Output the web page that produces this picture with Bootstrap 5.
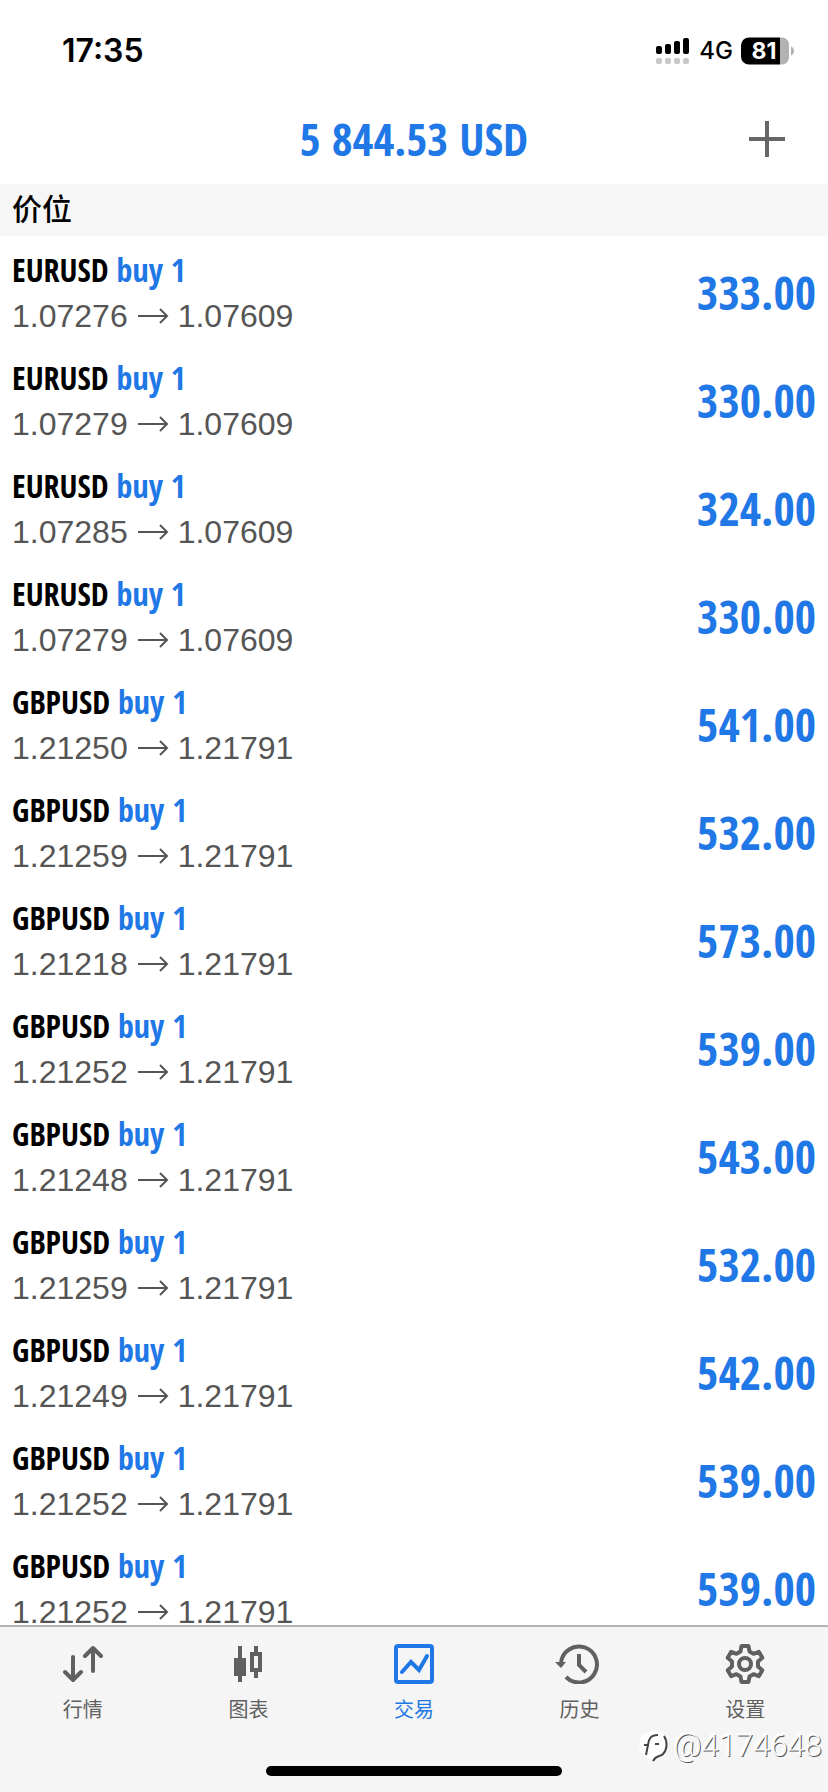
<!DOCTYPE html>
<html lang="zh-CN">
<head>
<meta charset="utf-8">
<meta name="viewport" content="width=device-width, initial-scale=1">
<title>交易</title>
<link href="https://cdn.jsdelivr.net/npm/bootstrap@5.3.0/dist/css/bootstrap.min.css" rel="stylesheet">
<style>
  :root { --accent: #1f78e6; --ink: #606060; }
  body { font-family: "Liberation Sans", "Noto Sans CJK SC", sans-serif; background: #fff; color: #000; }
  .narrow { font-family: "Open Sans Condensed", "Roboto Condensed", sans-serif; font-weight: 600; }
  .accent { color: var(--accent); }
  .status-bar { height: 96px; padding: 6px 33px 0 62px; font-family: Inter, sans-serif; }
  .clock { font-size: 32px; font-weight: 600; }
  .network { font-size: 24px; font-weight: 500; }
  .title-bar { height: 88px; padding: 0 41px 2px; }
  .title-spacer { width: 40px; }
  .balance { font-size: 45px; line-height: 48px; }
  .section-head { height: 52px; padding: 0 12px; background: #f6f6f6; font-size: 30px; font-weight: 500; line-height: 52px; }
  .position { height: 108px; padding: 4px 12px 0; }
  .symbol { font-size: 32px; line-height: 48px; }
  .rates { font-size: 32px; line-height: 36px; padding: 4px 0; color: #555; }
  .profit { font-size: 46px; line-height: 52px; }
  .tab-bar { background: #f5f5f5; border-top: 2px solid #b4b4b4; }
  .tab-link { color: var(--ink); font-size: 20px; line-height: 28px; padding-top: 17px; gap: 12px; }
  .tab-link.active { color: var(--accent); }
  .home-area { height: 68px; padding-bottom: 16px; }
  .home-pill { width: 296px; height: 10px; border-radius: 5px; background: #000; }
  .user-mark { right: 6px; bottom: 26px; font: 300 31px/40px Roboto, sans-serif; color: #fafafa; text-shadow: 1px 1px 0 #555, -1px -1px 0 #fff; }
</style>
</head>
<body>
<div class="d-flex flex-column vh-100 overflow-hidden position-relative">
  <div class="status-bar d-flex align-items-center justify-content-between flex-shrink-0">
    <span class="clock">17:35</span>
    <div class="d-flex align-items-center">
      <svg class="me-2" width="36" height="30" viewBox="0 0 36 30" aria-hidden="true">
        <g fill="#000"><rect x="1" y="10" width="6" height="8" rx="2"/><rect x="10" y="8" width="6" height="10" rx="2"/><rect x="19" y="5" width="6" height="13" rx="2"/><rect x="28" y="2" width="6" height="16" rx="2"/></g>
        <g fill="#c8c8c8"><rect x="1" y="22" width="6" height="6" rx="2"/><rect x="10" y="22" width="6" height="6" rx="2"/><rect x="19" y="22" width="6" height="6" rx="2"/><rect x="28" y="22" width="6" height="6" rx="2"/></g>
      </svg>
      <span class="network me-2">4G</span>
      <svg width="54" height="28" viewBox="0 0 54 28" role="img" aria-label="81%">
        <path fill="#b2b2b2" d="M39 0.500h2a7 7 0 0 1 7 7v13a7 7 0 0 1-7 7h-2zM50 9.500c4 1.500 4 7.500 0 9z"/>
        <path fill="#000" d="M8 .5h31v27H8a8 8 0 0 1-8-8v-11a8 8 0 0 1 8-8z"/>
        <text x="23" y="22" text-anchor="middle" font-size="23" font-weight="700" fill="#fff">81</text>
      </svg>
    </div>
  </div>

  <header class="title-bar d-flex align-items-center justify-content-between flex-shrink-0">
    <span class="title-spacer"></span>
    <h1 class="balance narrow accent m-0">5 844.53 USD</h1>
    <button type="button" class="btn p-0 border-0 d-flex" aria-label="添加">
      <svg width="40" height="40" viewBox="0 0 40 40" fill="none" stroke="#666" stroke-width="4"><path d="M20 2v36M2 20h36"/></svg>
    </button>
  </header>

  <h2 class="section-head m-0 flex-shrink-0">价位</h2>

  <main class="flex-grow-1 overflow-hidden">
    <ul class="list-unstyled m-0" id="positions"></ul>
  </main>

  <div class="tab-bar flex-shrink-0">
    <nav class="row g-0 row-cols-5">
      <a href="#quotes" class="col tab-link d-flex flex-column align-items-center text-decoration-none">
        <svg width="40" height="40" viewBox="0 0 40 40" fill="none" stroke="currentColor" stroke-width="4" stroke-linecap="round" stroke-linejoin="round"><path d="M10 13v23M2 28l8 8 8-8M30 27V4M22 12l8-8 8 8"/></svg>
        行情</a>
      <a href="#charts" class="col tab-link d-flex flex-column align-items-center text-decoration-none">
        <svg width="40" height="40" viewBox="0 0 40 40" fill="currentColor"><path d="M10 2h4v12h4v18h-4v6h-4v-6H6V14h4zM26 2h4v6h4v20h-4v6h-4v-6h-4V8h4zM26 12v12h4V12z" fill-rule="evenodd"/></svg>
        图表</a>
      <a href="#trade" class="col tab-link active d-flex flex-column align-items-center text-decoration-none" aria-current="page">
        <svg width="40" height="40" viewBox="0 0 40 40" fill="none" stroke="currentColor" stroke-width="4"><rect x="2" y="2" width="36" height="36" rx="2"/><path d="M8 28l9-10 8 8 8-14" stroke-linecap="round"/></svg>
        交易</a>
      <a href="#history" class="col tab-link d-flex flex-column align-items-center text-decoration-none">
        <svg width="50" height="40" viewBox="0 0 50 40" fill="none" stroke="currentColor" stroke-width="4"><path d="M6 19a18 18 0 1 1 5 14"/><path d="M24 10v11l7 7"/><path d="M0 18h11l-5 6z" fill="currentColor" stroke="none"/></svg>
        历史</a>
      <a href="#settings" class="col tab-link d-flex flex-column align-items-center text-decoration-none">
        <svg width="40" height="40" viewBox="0 0 40 40" fill="none" stroke="currentColor" stroke-width="4" stroke-linejoin="round"><path d="M16.500 2h7l1 5.500 4 2.300 5.300-2 3.500 6-4.300 3.700v5l4.300 3.700-3.500 6-5.300-2-4 2.300-1 5.500h-7l-1-5.500-4-2.300-5.300 2-3.500-6L7 22.500v-5l-4.300-3.700 3.500-6 5.300 2 4-2.300z"/><circle cx="20" cy="20" r="6"/></svg>
        设置</a>
    </nav>
    <div class="home-area d-flex align-items-end justify-content-center"><div class="home-pill"></div></div>
  </div>

  <div class="user-mark position-absolute d-flex align-items-center">
    <svg width="34" height="34" viewBox="0 0 34 34" fill="none"><circle cx="14" cy="16" r="14" fill="#fff"/><path d="M19 6c-7 0-9 3-10 10l-2 10M5 16h5M16 15h4M25 7c4 6 3 14-1 18-3 3-7 1-10 7" stroke="#444" stroke-width="2"/></svg>
    <span>@4174648</span>
  </div>
</div>

<script src="https://cdn.jsdelivr.net/npm/bootstrap@5.3.0/dist/js/bootstrap.bundle.min.js"></script>
<script>
  const positions = [
    ["EURUSD", "1.07276", "1.07609", "333.00"],
    ["EURUSD", "1.07279", "1.07609", "330.00"],
    ["EURUSD", "1.07285", "1.07609", "324.00"],
    ["EURUSD", "1.07279", "1.07609", "330.00"],
    ["GBPUSD", "1.21250", "1.21791", "541.00"],
    ["GBPUSD", "1.21259", "1.21791", "532.00"],
    ["GBPUSD", "1.21218", "1.21791", "573.00"],
    ["GBPUSD", "1.21252", "1.21791", "539.00"],
    ["GBPUSD", "1.21248", "1.21791", "543.00"],
    ["GBPUSD", "1.21259", "1.21791", "532.00"],
    ["GBPUSD", "1.21249", "1.21791", "542.00"],
    ["GBPUSD", "1.21252", "1.21791", "539.00"],
    ["GBPUSD", "1.21252", "1.21791", "539.00"]
  ];
  document.getElementById("positions").innerHTML = positions.map(([symbol, open, now, profit]) => `
    <li class="position d-flex align-items-center justify-content-between">
      <div>
        <div class="symbol narrow">${symbol} <span class="accent">buy 1</span></div>
        <div class="rates d-flex align-items-center gap-2">
          <span>${open}</span>
          <svg width="34" height="16" viewBox="0 0 34 16" fill="none" stroke="currentColor" stroke-width="2" aria-label="→"><path d="M2 8h29M24 1l7 7-7 7"/></svg>
          <span>${now}</span>
        </div>
      </div>
      <div class="profit narrow accent">${profit}</div>
    </li>`).join("");
</script>
</body>
</html>
